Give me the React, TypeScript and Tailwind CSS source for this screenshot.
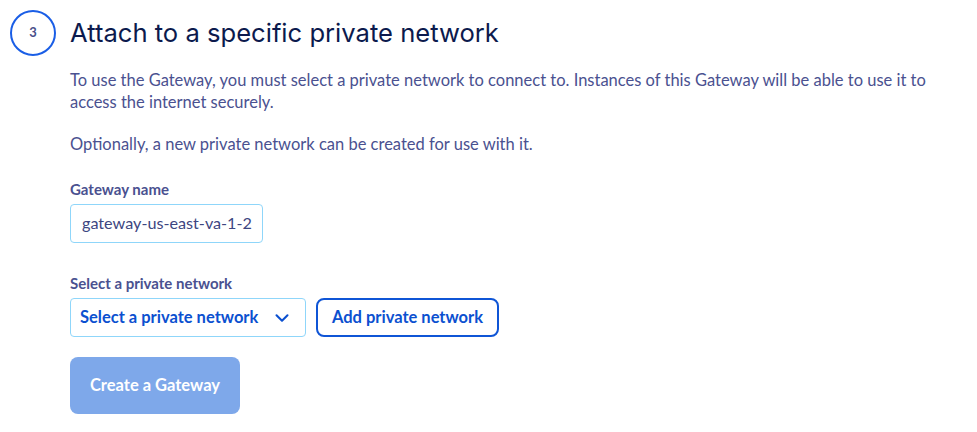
import { ChevronDown } from "lucide-react";

export default function App() {
  return (
    <div className="min-h-[432px] w-[977px] bg-white font-['Lato',sans-serif]">
      <div className="flex gap-[14px] pl-[10px] pt-[10px]">
        {/* Step marker */}
        <div className="flex h-[46px] w-[46px] shrink-0 items-center justify-center rounded-full border-2 border-[#1a5ee6] text-[13px] font-bold text-[#4a4f8a]">
          3
        </div>

        <div className="flex flex-col">
          <h2 className="flex h-[46px] items-center font-['Inter',sans-serif] text-[25.6px] font-normal text-[#0c1a4d]">
            Attach to a specific private network
          </h2>

          <p className="mt-[13px] max-w-[880px] text-[16.5px] leading-[22px] text-[#4a5190]">
            To use the Gateway, you must select a private network to connect to. Instances of this Gateway will be able to use it to access the internet securely.
          </p>
          <p className="mt-[20px] text-[16.5px] leading-[22px] text-[#4a5190]">
            Optionally, a new private network can be created for use with it.
          </p>

          {/* Gateway name */}
          <label className="mt-[25px] text-[15px] font-bold leading-[18px] text-[#4a5190]">
            Gateway name
          </label>
          <div className="mt-[6px] flex h-[39px] w-[193px] items-center whitespace-nowrap rounded-[4px] border border-[#8fd6fa] px-[11px] text-[16.2px] text-[#3d4681]">
            gateway-us-east-va-1-2
          </div>

          {/* Private network */}
          <label className="mt-[31px] text-[15px] font-bold leading-[18px] text-[#4a5190]">
            Select a private network
          </label>
          <div className="mt-[6px] flex gap-[10px]">
            <div className="flex h-[39px] w-[236px] items-center justify-between rounded-[4px] border border-[#8fd6fa] pl-[9px] pr-[12px] text-[16.5px] font-bold text-[#0b50d0]">
              <span>Select a private network</span>
              <ChevronDown size={22} strokeWidth={2.25} className="text-[#0b50d0]" />
            </div>
            <button
              type="button"
              className="h-[39px] w-[183px] rounded-[8px] border-2 border-[#0f55d6] text-[16.5px] font-bold text-[#0b50d0]"
            >
              Add private network
            </button>
          </div>

          <button
            type="button"
            className="mt-[20px] h-[57px] w-[170px] rounded-[8px] bg-[#7ea8ea] text-[16.5px] font-bold text-white"
          >
            Create a Gateway
          </button>
        </div>
      </div>
    </div>
  );
}
